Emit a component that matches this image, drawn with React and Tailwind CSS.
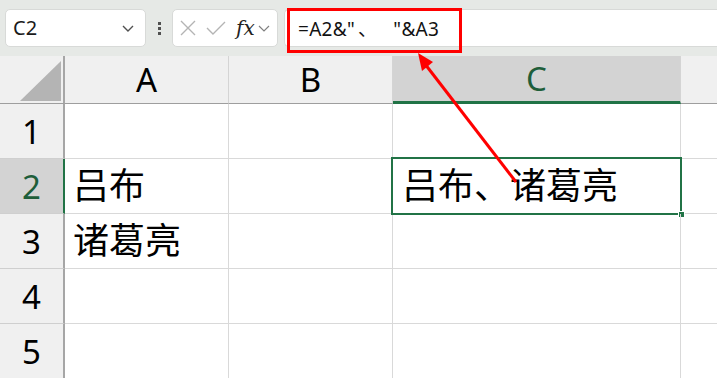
import React from "react";

const font = { fontFamily: '"Noto Sans", "Noto Sans CJK SC", sans-serif' };

function HeaderCell({ w, label, selected }) {
  return (
    <div
      className={`${w} h-full flex items-center justify-center border-r border-[#d4d4d4] ${
        selected ? "bg-[#d3d3d3] text-[#1e5e3a] border-b-[3px] border-b-[#217346]" : "border-b border-b-[#9e9e9e]"
      } text-[33px] leading-none`}
    >
      {label}
    </div>
  );
}

function Row({ n, a, c, selected }) {
  return (
    <div className="flex h-[55px]">
      <div
        className={`w-[65px] shrink-0 flex items-center justify-center text-[33px] leading-none border-b border-[#cfcfcf] ${
          selected
            ? "bg-[#d3d3d3] text-[#1e5e3a] border-r-2 border-r-[#217346]"
            : "bg-[#f0f0f0] text-black border-r-2 border-r-[#a6a6a6]"
        }`}
      >
        {n}
      </div>
      <div className="w-[164px] shrink-0 border-r border-b border-[#d9d9d9] flex items-center pl-[8px] text-[36px] leading-none">
        {a}
      </div>
      <div className="w-[164px] shrink-0 border-r border-b border-[#d9d9d9]" />
      <div className="w-[288px] shrink-0 border-r border-b border-[#d9d9d9] relative flex items-center pl-[9px] text-[36px] leading-none">
        {c}
        {selected && (
          <div className="absolute left-[-2px] top-[-2px] right-[-2px] bottom-[-2px] border-2 border-[#217346]">
            <div className="absolute right-[-5px] bottom-[-5px] w-[7px] h-[7px] bg-[#217346] border border-white" />
          </div>
        )}
      </div>
      <div className="flex-1 border-b border-[#d9d9d9]" />
    </div>
  );
}

export default function App() {
  return (
    <div className="w-[717px] h-[378px] overflow-hidden relative bg-white text-black" style={font}>
      {/* top bar */}
      <div className="h-[56px] bg-[#e6e9e6] flex items-center">
        <div className="ml-[5px] w-[141px] h-[38px] bg-white border border-[#d8dad8] rounded-[5px] flex items-center pl-[7px] pr-[10px]">
          <span className="text-[20px] leading-none text-[#1a1a1a]">C2</span>
          <svg className="ml-auto" width="14" height="10" viewBox="0 0 14 10">
            <path d="M2 3 L7 8 L12 3" fill="none" stroke="#505050" strokeWidth="1.4" />
          </svg>
        </div>
        <div className="w-[26px] flex flex-col items-center gap-[2px]">
          <div className="w-[3px] h-[3px] bg-[#505050]" />
          <div className="w-[3px] h-[3px] bg-[#505050]" />
          <div className="w-[3px] h-[3px] bg-[#505050]" />
        </div>
        <div className="w-[106px] h-[38px] bg-white border border-[#d8dad8] rounded-[5px] flex items-center pl-[6px]">
          <svg width="18" height="18" viewBox="0 0 18 18">
            <path d="M2 2 L16 16 M16 2 L2 16" stroke="#b4b4b4" strokeWidth="1.4" fill="none" />
          </svg>
          <svg className="ml-[9px]" width="20" height="16" viewBox="0 0 20 16">
            <path d="M1 8 L7 14 L19 2" stroke="#b4b4b4" strokeWidth="1.4" fill="none" />
          </svg>
          <span
            className="ml-[10px] text-[20px] leading-none italic text-[#222]"
            style={{ fontFamily: '"DejaVu Serif", "Liberation Serif", serif' }}
          >
            fx
          </span>
          <svg className="ml-[3px]" width="12" height="9" viewBox="0 0 12 9">
            <path d="M1 2 L6 7 L11 2" fill="none" stroke="#808080" strokeWidth="1.2" />
          </svg>
        </div>
        <div className="ml-[6px] flex-1 h-[38px] bg-white border border-r-0 border-[#d8dad8] rounded-l-[5px] flex items-center pl-[13px]">
          <span
            className="text-[19px] leading-none text-[#111] whitespace-pre tracking-[0.3px]"
            style={{ fontFamily: '"Noto Sans", "Noto Sans CJK SC", sans-serif' }}
          >
            =A2&amp;"<span className="ml-[3px] mr-[16px]" style={{ fontFamily: '"Noto Sans CJK SC", sans-serif' }}>、</span>"&amp;A3
          </span>
        </div>
      </div>

      {/* column header */}
      <div className="flex h-[48px] bg-[#f0f0f0]">
        <div className="w-[65px] shrink-0 h-full border-r-2 border-r-[#a6a6a6] border-b border-b-[#9e9e9e] flex items-end justify-end pr-[2px] pb-[2px]">
          <svg width="41" height="40" viewBox="0 0 41 40">
            <path d="M41 0 L41 40 L0 40 Z" fill="#b4b4b4" />
          </svg>
        </div>
        <HeaderCell w="w-[164px] shrink-0" label="A" />
        <HeaderCell w="w-[164px] shrink-0" label="B" />
        <HeaderCell w="w-[288px] shrink-0" label="C" selected />
        <div className="flex-1 h-full border-b border-b-[#9e9e9e]" />
      </div>

      <Row n="1" />
      <Row n="2" a="吕布" c="吕布、诸葛亮" selected />
      <Row n="3" a="诸葛亮" />
      <Row n="4" />
      <Row n="5" />

      {/* annotation */}
      <div className="absolute left-[287px] top-[8px] w-[175px] h-[45px] border-[3px] border-[#ff0000]" />
      <svg className="absolute left-0 top-0 pointer-events-none" width="717" height="378">
        <line x1="516" y1="182" x2="425" y2="64" stroke="#ff0000" strokeWidth="3" />
        <polygon points="418,53 433,62 422,71" fill="#ff0000" />
      </svg>
    </div>
  );
}
